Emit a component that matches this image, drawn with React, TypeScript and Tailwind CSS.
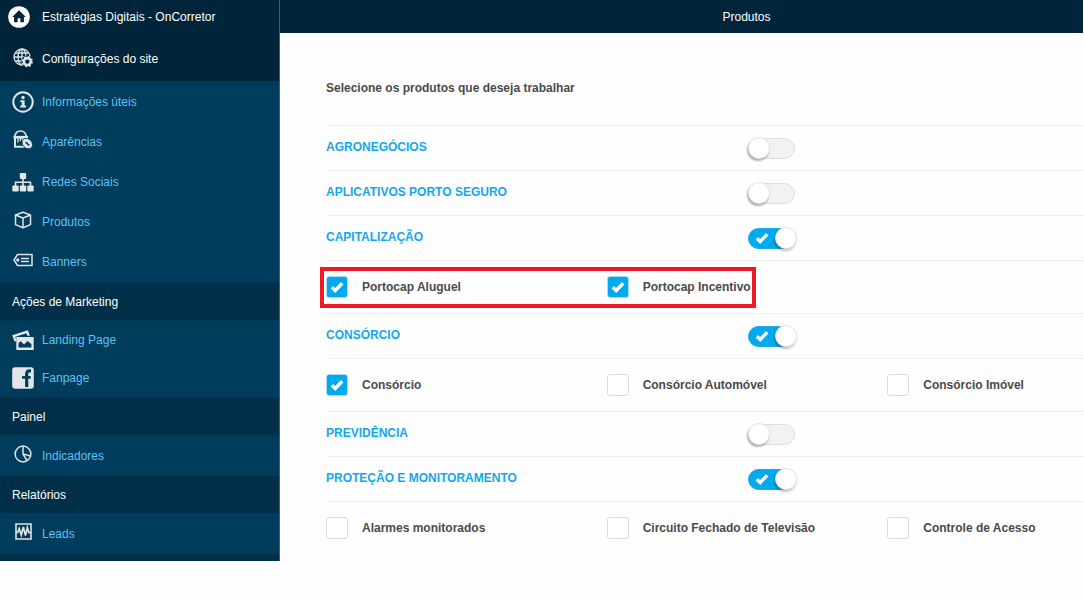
import React, { useState } from "react";

function CheckIcon({ className }: { className: string }) {
  return (
    <svg viewBox="0 0 14 12" className={`pointer-events-none absolute h-3 w-[14px] ${className}`} fill="none">
      <path d="M1.800 6.300 5.200 9.500 12.200 2.200" stroke="#ffffff" strokeWidth="3.400" />
    </svg>
  );
}

function HomeIcon() {
  return (
    <svg viewBox="0 0 22 22" className="size-[22px]">
      <circle cx="11" cy="11" r="10.800" fill="#ffffff" />
      <path d="M11 4.200 17.800 11h-1.900v5.200h-3.500v-4h-2.800v4H6.100V11H4.200z" fill="#00253a" />
    </svg>
  );
}

function GlobeGearIcon() {
  return (
    <svg viewBox="0 0 20 20" className="size-5" fill="none" stroke="#dde3e6" strokeWidth="1.300">
      <circle cx="9" cy="9" r="8" />
      <ellipse cx="9" cy="9" rx="4" ry="8" />
      <path d="M9 1v16M1 9h16M2.300 5h13.400M2.300 13h13.400" />
      <circle cx="14.300" cy="13.600" r="6" fill="#00253a" stroke="none" />
      <circle cx="14.300" cy="13.600" r="3.500" strokeWidth="2.600" />
      <circle cx="14.300" cy="13.600" r="5" strokeWidth="1.200" strokeDasharray="2 1.930" />
    </svg>
  );
}

function InfoIcon() {
  return (
    <svg viewBox="0 0 22 22" className="size-[22px]" fill="none">
      <circle cx="11" cy="11" r="9.700" stroke="#e3e6e8" strokeWidth="2" />
      <circle cx="11" cy="6.500" r="1.700" fill="#e3e6e8" />
      <path d="M8.200 9.200h4.400v5.400h1.400v1.800H8.200v-1.800h1.500V11H8.200z" fill="#e3e6e8" />
    </svg>
  );
}

function PaintIcon() {
  return (
    <svg viewBox="0 0 20 20" className="size-5" fill="none" stroke="#e3e6e8">
      <path d="M1.500 7.500C2 3.500 4.500 1 7.500 1s5.500 2.500 6 6" strokeWidth="1.700" />
      <path d="M0.500 7.200h14.500" strokeWidth="2.600" />
      <path d="M2 7.500v9.300h11" strokeWidth="2" />
      <path d="M5 8v4.500M7.500 8v3M9.700 8v4" strokeWidth="1.400" />
      <ellipse cx="14.300" cy="13.600" rx="5.800" ry="4.600" transform="rotate(45 14.300 13.600)" fill="#e3e6e8" stroke="#003c5b" strokeWidth="0.800" />
      <path d="M12.600 12.200l3.600 3.200" stroke="#003c5b" strokeWidth="1.600" />
    </svg>
  );
}

function SitemapIcon() {
  return (
    <svg viewBox="0 0 22 20" className="h-5 w-[22px]" fill="#e3e6e8">
      <rect x="7.800" y="1" width="6.400" height="6" rx="1" />
      <rect x="0.300" y="13.400" width="6.400" height="6" rx="1" />
      <rect x="7.800" y="13.400" width="6.400" height="6" rx="1" />
      <rect x="15.300" y="13.400" width="6.400" height="6" rx="1" />
      <path d="M11 6v8M3.500 14v-3.800h15V14" fill="none" stroke="#e3e6e8" strokeWidth="1.600" />
    </svg>
  );
}

function BoxIcon() {
  return (
    <svg viewBox="0 0 18 18" className="size-[18px]" fill="none" stroke="#dfe4e7" strokeWidth="1.500" strokeLinejoin="round">
      <path d="M9 1.200 16.500 4v9.600L9 16.800 1.500 13.600V4z" />
      <path d="M1.500 4 9 7l7.500-3M9 7v9.800" />
    </svg>
  );
}

function TagIcon() {
  return (
    <svg viewBox="0 0 20 14" className="h-[14px] w-5" fill="none" stroke="#dfe4e7" strokeWidth="1.500">
      <path d="M4.500 1.500H19v11H4.500L1 7z" />
      <circle cx="4.800" cy="7" r="0.900" />
      <path d="M8 5.500h8M8 8.500h8" />
    </svg>
  );
}

function PhotosIcon() {
  return (
    <svg viewBox="0 0 22 20" className="h-5 w-[22px]" fill="none">
      <path d="M0.200 5.300 15.800 0.200l2.200 5.600h-2.600l-1-2.600L3.300 6.800l1.300 4-2 .9z" fill="#e3e6e8" />
      <path d="M4.300 7h17.400v13H4.300z" fill="#e3e6e8" />
      <path d="M6.500 17.500V13l2.200-1.800 3.400 3.200 3.400-3.400 3.900 3v3.500z" fill="#003c5b" />
    </svg>
  );
}

function FacebookIcon() {
  return (
    <svg viewBox="0 0 22 22" className="size-[22px]" fill="none">
      <rect x="0.200" y="0.200" width="21.600" height="21.600" rx="3" fill="#e3e6e8" />
      <path d="M19 3.900h-1.500c-2 0-2.800 1-2.800 2.900V20" stroke="#003c5b" strokeWidth="3.200" />
      <path d="M10 10.400h8.700" stroke="#003c5b" strokeWidth="2.600" />
    </svg>
  );
}

function PieIcon() {
  return (
    <svg viewBox="0 0 18 18" className="size-[18px]" fill="none" stroke="#dfe4e7" strokeWidth="1.500">
      <circle cx="9" cy="9" r="7.900" />
      <path d="M9 1v8l7.600 2M9 9l4 6.700" />
    </svg>
  );
}

function PulseIcon() {
  return (
    <svg viewBox="0 0 17 17" className="size-[17px]" fill="none" stroke="#dfe4e7">
      <path d="M1 1h15v15H1z" strokeWidth="1.600" />
      <path d="M1 9.500h1.700L4.200 5.500 6.300 12 8.300 4l2.200 8.500 1.800-8 1.600 5.200H16" strokeWidth="1.700" />
    </svg>
  );
}

type Item = { label: string; icon: React.ReactNode; raised?: boolean };

function MenuLink({ item, size }: { item: Item; size: string }) {
  return (
    <li>
      <a href="#" className={`flex items-center gap-2 pl-3 text-[#5cc3f7] ${size}`}>
        <span className={`flex w-[22px] justify-center ${item.raised ? "pb-1" : ""}`}>{item.icon}</span>
        {item.label}
      </a>
    </li>
  );
}

function MenuGroup({ title, items, size }: { title?: string; items: Item[]; size: string }) {
  return (
    <section>
      {title && <h2 className="flex h-[37px] items-center bg-[#003049] pl-3 text-white">{title}</h2>}
      <ul className="border-y border-[#003856] bg-[#003c5b]">
        {items.map((item) => (
          <MenuLink key={item.label} item={item} size={size} />
        ))}
      </ul>
    </section>
  );
}

function Toggle({ id, initial }: { id: string; initial: boolean }) {
  const [on, setOn] = useState(initial);
  return (
    <span className="relative flex h-[22px] w-[50px] items-center">
      <input
        id={id}
        type="checkbox"
        role="switch"
        checked={on}
        onChange={() => setOn(!on)}
        className="ml-px h-[21px] w-[47px] cursor-pointer appearance-none rounded-full border border-[#dedede] bg-[#f2f2f2] checked:border-[#25a9e2] checked:bg-[#00a9f0]"
      />
      {on && <CheckIcon className="left-2" />}
      <span
        className={`pointer-events-none absolute size-[22px] rounded-full border border-[#e4e4e4] bg-white ${
          on ? "right-0 shadow-[-1px_2px_3px_rgba(0,0,0,0.25)]" : "left-px shadow-[-1px_2px_2px_rgba(0,0,0,0.3)]"
        }`}
      />
    </span>
  );
}

function Option({ label, initial }: { label: string; initial: boolean }) {
  const [on, setOn] = useState(initial);
  return (
    <label className="flex cursor-pointer items-center gap-[14px]">
      <span className="relative flex size-[22px] items-center justify-center">
        <input
          type="checkbox"
          checked={on}
          onChange={() => setOn(!on)}
          className="size-[22px] appearance-none rounded-[3px] border border-[#dcdcdc] bg-white checked:border-[#a8dcf4] checked:bg-[#00a9f0]"
        />
        {on && <CheckIcon className="" />}
      </span>
      {label}
    </label>
  );
}

type Product = { name: string; on: boolean; options?: [string, boolean][]; highlight?: boolean };

const products: Product[] = [
  { name: "AGRONEGÓCIOS", on: false },
  { name: "APLICATIVOS PORTO SEGURO", on: false },
  {
    name: "CAPITALIZAÇÃO",
    on: true,
    highlight: true,
    options: [["Portocap Aluguel", true], ["Portocap Incentivo", true]],
  },
  {
    name: "CONSÓRCIO",
    on: true,
    options: [["Consórcio", true], ["Consórcio Automóvel", false], ["Consórcio Imóvel", false]],
  },
  { name: "PREVIDÊNCIA", on: false },
  {
    name: "PROTEÇÃO E MONITORAMENTO",
    on: true,
    options: [["Alarmes monitorados", false], ["Circuito Fechado de Televisão", false], ["Controle de Acesso", false]],
  },
];

export default function App() {
  return (
    <div className="flex min-h-screen items-start bg-[#fefefe] font-['Liberation_Sans',Arial,sans-serif] text-[12px] leading-4">
      <nav className="w-[280px] shrink-0 border-r border-[#335f78] bg-[#00253a]">
        <a href="#" className="flex h-[34px] items-center gap-3 pl-2 text-white">
          <HomeIcon />
          Estratégias Digitais - OnCorretor
        </a>
        <a href="#" className="flex h-[47px] items-center gap-2 pt-0.5 pl-3 text-white">
          <span className="flex w-[22px] justify-center pb-0.5">
            <GlobeGearIcon />
          </span>
          Configurações do site
        </a>
        <MenuGroup
          size="h-10"
          items={[
            { label: "Informações úteis", icon: <InfoIcon /> },
            { label: "Aparências", icon: <PaintIcon />, raised: true },
            { label: "Redes Sociais", icon: <SitemapIcon /> },
            { label: "Produtos", icon: <BoxIcon />, raised: true },
            { label: "Banners", icon: <TagIcon />, raised: true },
          ]}
        />
        <MenuGroup
          title="Ações de Marketing"
          size="h-[38px]"
          items={[
            { label: "Landing Page", icon: <PhotosIcon /> },
            { label: "Fanpage", icon: <FacebookIcon /> },
          ]}
        />
        <MenuGroup title="Painel" size="h-[39px]" items={[{ label: "Indicadores", icon: <PieIcon />, raised: true }]} />
        <MenuGroup title="Relatórios" size="h-[39px]" items={[{ label: "Leads", icon: <PulseIcon />, raised: true }]} />
        <div className="h-[7px] bg-[#003049]" />
      </nav>

      <div className="min-w-0 flex-1 pr-px">
        <header className="flex h-[33px] items-center justify-center bg-[#00253a] pl-[130px] text-white">
          <h1>Produtos</h1>
        </header>
        <main className="pt-[47px] pl-[46px] font-bold text-[#4a4a4a]">
          <p className="pb-[29px]">Selecione os produtos que deseja trabalhar</p>
          {products.map((product, index) => (
            <section key={product.name}>
              <div className="grid h-[45px] grid-cols-[422fr_336fr] items-center border-t border-[#efefef]">
                <label htmlFor={`product-${index}`} className="pb-0.5 text-[#12a8ec]">
                  {product.name}
                </label>
                <Toggle id={`product-${index}`} initial={product.on} />
              </div>
              {product.options && (
                <div className="relative grid h-[53px] grid-cols-[281fr_281fr_196fr] items-center border-t border-[#efefef]">
                  {product.options.map(([label, on]) => (
                    <Option key={label} label={label} initial={on} />
                  ))}
                  {product.highlight && (
                    <span className="pointer-events-none absolute top-1.5 -left-1.5 h-[41px] w-[436px] border-4 border-[#ed1c24]" />
                  )}
                </div>
              )}
            </section>
          ))}
        </main>
      </div>
    </div>
  );
}
